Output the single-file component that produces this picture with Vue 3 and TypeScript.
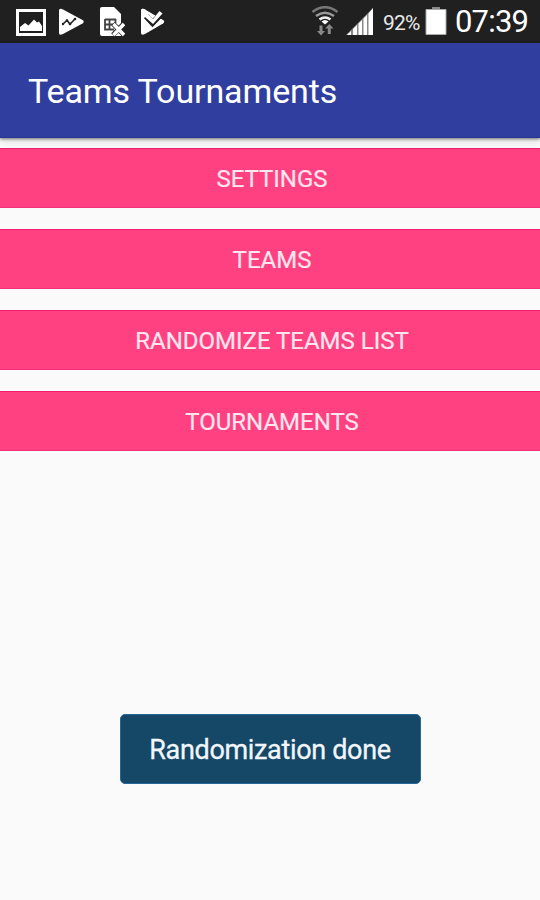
<script setup lang="ts">
interface MenuItem {
  id: string
  label: string
}

const battery = '92%'
const clock = '07:39'
const items: MenuItem[] = [
  { id: 'settings', label: 'SETTINGS' },
  { id: 'teams', label: 'TEAMS' },
  { id: 'randomize', label: 'RANDOMIZE TEAMS LIST' },
  { id: 'tournaments', label: 'TOURNAMENTS' },
]
const toast = 'Randomization done'
</script>

<template>
  <div class="screen">
    <header class="status">
      <div class="notifications">
        <svg class="picture" width="30" height="27" viewBox="0 0 30 27">
          <path d="M1.500 1.500H28.500V25.500H1.500Z" fill="none" stroke="#fff" stroke-width="3" />
          <path d="M4 22V18L9 14L12.500 16.500L18 10.500L21 13.500L23 12.500L26 17V22Z" fill="#fff" />
        </svg>
        <svg class="play" width="26" height="28" viewBox="0 0 26 28">
          <path d="M0 2Q1 0 4 1.500L23.500 12Q26 13.500 23.500 15.500L4 26Q0 28 0 25Z" fill="#fff" />
          <path d="M4 16L8 12.500L11 16L16 11" fill="none" stroke="#222" stroke-width="1.600" />
          <circle cx="4" cy="16" r="1.200" fill="#222" />
          <circle cx="8" cy="12.500" r="1.300" fill="#222" />
          <circle cx="11" cy="16" r="1.300" fill="#222" />
          <circle cx="16" cy="11" r="1.300" fill="#222" />
        </svg>
        <svg class="sim" width="27" height="31" viewBox="0 0 27 31">
          <path d="M2 0H14L21 7V29H2Q0 29 0 27V2Q0 0 2 0Z" fill="#fff" />
          <path d="M5 12.500H16M5 17.500H14M5 22.500H14M5 12V23.500M9.500 12V23.500M15.500 12V16" fill="none" stroke="#444" stroke-width="1.800" />
          <path d="M13 16.500L24 28M24 16.500L13 28" stroke="#333" stroke-width="5" />
          <path d="M13.500 17L24 28M24 17L13.500 28" stroke="#fff" stroke-width="3.300" />
        </svg>
        <svg class="check" width="25" height="28" viewBox="0 0 25 28">
          <path d="M0 2Q1 0 4 1.500L22 12Q24.500 13.500 22 15.500L4 26Q0 28 0 25Z" fill="#fff" />
          <path d="M5 8L11.500 15L23 3" fill="none" stroke="#202020" stroke-width="6" />
          <path d="M0 2Q1 0 4 1.500L8 7L12 11L18.500 3L21.500 5.500L12 16L4 9L0 12Z" fill="#fff" />
        </svg>
      </div>
      <div class="system">
        <svg class="wifi" width="28" height="31" viewBox="0 0 28 31">
          <g fill="none" stroke-width="2.600">
            <path d="M1.500 6Q14 -3.500 26.500 6" stroke="#777" />
            <path d="M5 10Q14 3.500 23 10" stroke="#999" />
            <path d="M8.500 13.500Q14 9.500 19.500 13.500" stroke="#eee" />
          </g>
          <path d="M10.500 15.500Q14 12.500 17.500 15.500L14 18.500Z" fill="#fff" />
          <path d="M8.500 19.500H11.500V25H14L10 29.500L6 25H8.500Z" fill="#888" />
          <path d="M16.800 28H19.800V22.500H22.500L18.300 18L14.200 22.500H16.800Z" fill="#888" />
        </svg>
        <svg class="signal" width="28" height="28" viewBox="0 0 28 28">
          <path d="M0 27L27 0V27Z" fill="#888" />
          <path d="M1 27L5 23V27ZM7 21L11 17V27H7ZM12.500 15.500L16 12V27H12.500ZM17.500 10.500L21 7V27H17.500ZM22.500 5.500L27 0V27H22.500Z" fill="#fff" />
        </svg>
        <span class="percent">{{ battery }}</span>
        <svg class="battery" width="22" height="28" viewBox="0 0 22 28">
          <path d="M7 0H15V3H7Z" fill="#888" />
          <path d="M1 2.500H21V27.500H1Z" fill="#fff" stroke="#aaa" />
        </svg>
        <span class="clock">{{ clock }}</span>
      </div>
    </header>
    <div class="appbar"><h1>{{ 'Teams Tournaments' }}</h1></div>
    <main class="content">
      <nav class="menu">
        <button v-for="item in items" :key="item.id" :class="['item', item.id]" type="button">
          <span>{{ item.label }}</span>
        </button>
      </nav>
      <div class="toast" role="status"><span>{{ toast }}</span></div>
    </main>
  </div>
</template>

<style>
body {
  margin: 0;
  background: #fafafa;
}
</style>

<style scoped>
.screen {
  width: 540px;
  height: 900px;
  display: flex;
  flex-direction: column;
  overflow: hidden;
  background: #fafafa;
  color: #fff;
  font-family: Roboto, "Liberation Sans", sans-serif;
}
.status {
  height: 43px;
  flex: none;
  display: flex;
  justify-content: space-between;
  box-sizing: border-box;
  padding: 0 9px 0 16px;
  background: #202020;
}
.notifications,
.system {
  display: flex;
  align-items: flex-start;
}
svg {
  display: block;
  flex: none;
}
.picture { margin-top: 9px; }
.play { margin: 8px 0 0 13px; }
.sim { margin: 7px 0 0 15px; }
.check { margin: 8px 0 0 14px; }
.wifi { margin-top: 6px; }
.signal { margin: 8px 0 0 7px; }
.percent {
  width: 38px;
  margin-left: 9px;
  font-size: 21px;
  line-height: 46px;
  letter-spacing: -0.8px;
  color: #e8e8e8;
  white-space: nowrap;
}
.battery { margin: 7px 0 0 4px; }
.clock {
  width: 76px;
  margin-left: 8px;
  font-size: 31px;
  line-height: 43px;
  letter-spacing: -0.8px;
  white-space: nowrap;
}
.appbar {
  position: relative;
  height: 95px;
  flex: none;
  display: flex;
  align-items: center;
  box-sizing: border-box;
  padding: 2px 28px 0;
  background: #303f9f;
  border-bottom: 1px solid #24378e;
  box-shadow: 0 1px 3px rgba(0, 0, 0, 0.5), 0 4px 8px rgba(0, 0, 0, 0.1);
}
h1 {
  margin: 0;
  font-size: 34px;
  font-weight: 400;
  line-height: 40px;
  letter-spacing: -0.12px;
  white-space: nowrap;
}
.content {
  flex: 1;
  display: flex;
  flex-direction: column;
  align-items: center;
  justify-content: space-between;
  padding: 10px 0 116px;
}
.menu {
  width: 100%;
  display: flex;
  flex-direction: column;
  gap: 21px;
}
.item {
  height: 60px;
  padding: 2px 0 0 4px;
  border: 0;
  border-top: 1px solid #ef1d70;
  border-bottom: 1px solid #f43078;
  background: #ff4081;
  color: #ffe6ef;
  font: inherit;
  font-size: 24px;
  line-height: 30px;
  -webkit-text-stroke: 0.2px #ffe6ef;
}
.toast {
  width: 301px;
  height: 70px;
  display: flex;
  align-items: center;
  justify-content: center;
  box-sizing: border-box;
  padding-top: 2px;
  border: 1px solid #246695;
  border-radius: 5px;
  background: #154767;
  color: #f2f6fa;
  font-size: 27px;
  letter-spacing: -0.33px;
  white-space: nowrap;
  -webkit-text-stroke: 0.3px #f2f6fa;
}
</style>
